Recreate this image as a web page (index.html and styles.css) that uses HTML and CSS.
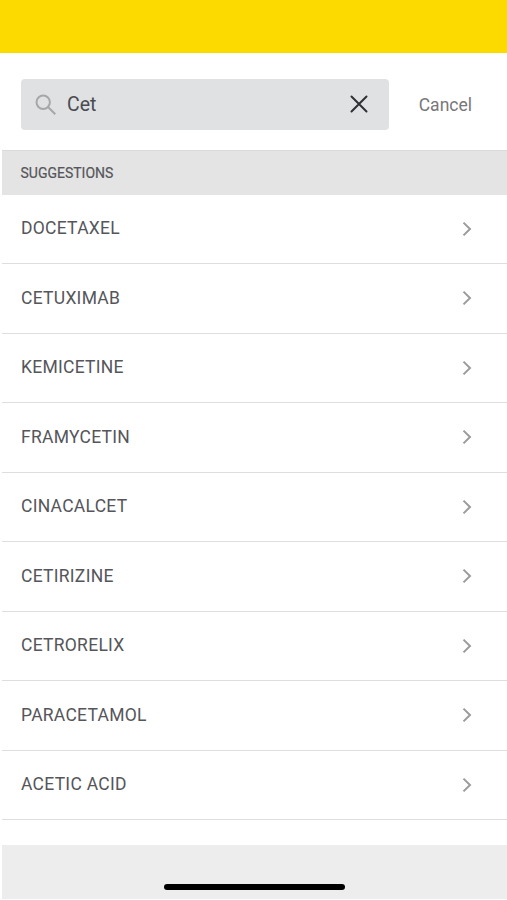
FILE: index.html
```html
<!DOCTYPE html>
<html lang="en">
<head>
    <meta charset="UTF-8">
    <meta name="viewport" content="width=device-width, initial-scale=1.0">
    <title>Search</title>
    <link rel="stylesheet" href="styles.css">
</head>
<body>
    <div class="screen">
        <div class="status-bar"></div>

        <div class="search">
            <div class="search-box">
                <svg class="search-icon" width="22" height="22" viewBox="0 0 22 22">
                    <circle cx="8.2" cy="8.2" r="6.7"/>
                    <path d="M13 13l7.3 7.3"/>
                </svg>
                <span class="search-text">Cet</span>
                <svg class="clear-icon" width="18" height="18" viewBox="0 0 18 18">
                    <path d="M1.5 1.5l15 15M16.5 1.5l-15 15"/>
                </svg>
            </div>
            <span class="cancel">Cancel</span>
        </div>

        <div class="list-title">SUGGESTIONS</div>
        <ul class="suggestions" id="suggestions"></ul>

        <div class="bottom-bar">
            <div class="home-indicator"></div>
        </div>
    </div>
    <script>
        const items = ['DOCETAXEL', 'CETUXIMAB', 'KEMICETINE', 'FRAMYCETIN', 'CINACALCET',
            'CETIRIZINE', 'CETRORELIX', 'PARACETAMOL', 'ACETIC ACID'];

        document.getElementById('suggestions').innerHTML = items.map(item => `
            <li>
                <span>${item}</span>
                <svg class="chevron" width="10" height="16" viewBox="0 0 10 16">
                    <path d="M1.5 1.6L8 8l-6.5 6.4"/>
                </svg>
            </li>`).join('');
    </script>
</body>
</html>
```
FILE: styles.css
```css
* {
    box-sizing: border-box;
}

body {
    margin: 0;
    background-color: #fff;
    font-family: Roboto, "Liberation Sans", sans-serif;
    color: #55565a;
}

.screen {
    display: flex;
    flex-direction: column;
    height: 900px;
    overflow: hidden;
}

.status-bar {
    height: 53px;
    background-color: #fcda00;
}

.search {
    display: flex;
    align-items: center;
    height: 97px;
    padding: 5px 35px 0 21px;
}

.search-box {
    display: flex;
    align-items: center;
    width: 368px;
    height: 51px;
    padding: 0 21.5px 0 14px;
    border-radius: 4px;
    background-color: #dfe1e3;
}

.search-icon {
    margin-top: 1px;
    fill: none;
    stroke: #a6a7a9;
    stroke-width: 2;
}

.search-text {
    flex: 1;
    margin-left: 10px;
    font-size: 19.5px;
    color: #4b4c50;
}

.clear-icon {
    fill: none;
    stroke: #2e3034;
    stroke-width: 2;
    stroke-linecap: round;
}

.cancel {
    margin-left: auto;
    padding-top: 2px;
    font-size: 17.5px;
    color: #77777a;
}

.list-title {
    height: 44.5px;
    margin-left: 2px;
    padding-left: 18.5px;
    border-top: 1px solid #dadada;
    background-color: #e4e4e4;
    font-size: 14px;
    line-height: 45px;
    -webkit-text-stroke: 0.2px #55565a;
}

.suggestions {
    margin: 0 0 0 2px;
    padding: 0;
    list-style: none;
}

.suggestions li {
    display: flex;
    align-items: center;
    justify-content: space-between;
    height: 69.5px;
    padding: 0 35px 0 19px;
    border-bottom: 1px solid #dedede;
    font-size: 17.5px;
    letter-spacing: 0.27px;
}

.suggestions span {
    padding-bottom: 1.5px;
}

.chevron {
    fill: none;
    stroke: #9b9b9b;
    stroke-width: 2;
}

.bottom-bar {
    height: 54px;
    margin: auto 0 1px 2px;
    padding-top: 39px;
    background-color: #ededed;
}

.home-indicator {
    width: 181px;
    height: 6px;
    margin-left: 162px;
    border-radius: 3px;
    background-color: #000;
}
```
